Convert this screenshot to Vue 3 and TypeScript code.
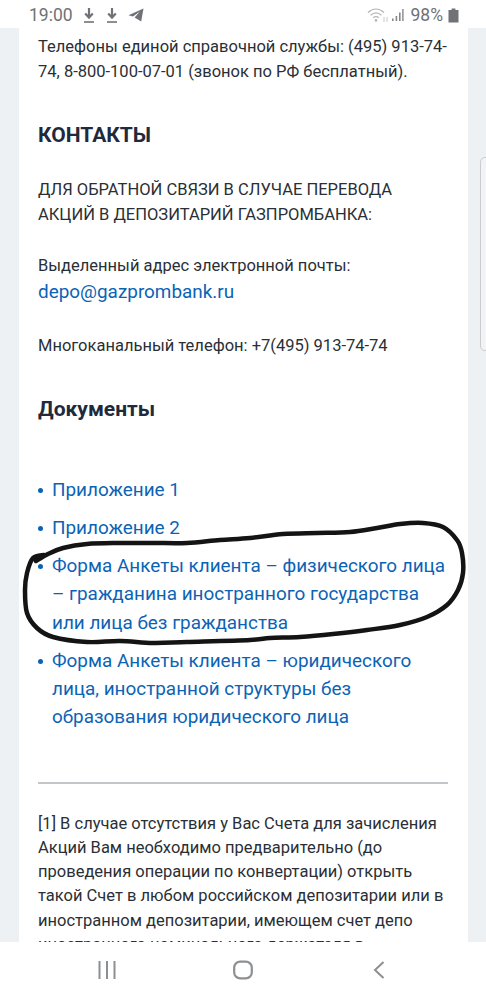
<script setup lang="ts">
const links: string[] = [
  'Приложение 1',
  'Приложение 2',
  'Форма Анкеты клиента – физического лица – гражданина иностранного государства или лица без гражданства',
  'Форма Анкеты клиента – юридического лица, иностранной структуры без образования юридического лица',
]

const pts: [number, number][] = [
  [44, 555], [33, 558], [27, 573], [25, 590], [27, 613], [37, 628], [53, 637], [87, 642], [120, 641], [153, 643], [187, 642], [250, 640], [270, 638], [300, 637], [333, 634], [367, 630], [400, 625], [427, 617], [447, 605], [458, 590], [463, 573], [462, 553], [457, 540], [443, 527], [423, 523], [400, 524], [377, 528], [350, 532], [317, 533], [283, 534], [250, 538], [220, 540], [187, 543], [153, 543], [120, 543], [87, 544], [63, 548], [48, 554], [36, 561],
]

function smooth(p: [number, number][]): string {
  let d = `M${p[0][0]} ${p[0][1]}`
  for (let i = 0; i < p.length - 1; i++) {
    const a = p[Math.max(i - 1, 0)]
    const b = p[i]
    const c = p[i + 1]
    const e = p[Math.min(i + 2, p.length - 1)]
    d += ` C${(b[0] + (c[0] - a[0]) / 6).toFixed(1)} ${(b[1] + (c[1] - a[1]) / 6).toFixed(1)} ${(c[0] - (e[0] - b[0]) / 6).toFixed(1)} ${(c[1] - (e[1] - b[1]) / 6).toFixed(1)} ${c[0]} ${c[1]}`
  }
  return d
}
const scribble = smooth(pts)
</script>

<template>
  <div class="phone">
    <header class="status">
      <div class="status-left">
        <span class="time">19:00</span>
        <svg class="ico" width="14" height="18" viewBox="0 0 14 18"><path d="M7 2v9M3.2 7.6 7 11.6l3.8-4" fill="none" stroke="#6f7276" stroke-width="2.2"/><path d="M2 16h10" stroke="#6f7276" stroke-width="1.6"/></svg>
        <svg class="ico" width="14" height="18" viewBox="0 0 14 18"><path d="M7 2v9M3.2 7.6 7 11.6l3.8-4" fill="none" stroke="#6f7276" stroke-width="2.2"/><path d="M2 16h10" stroke="#6f7276" stroke-width="1.6"/></svg>
        <svg class="ico" width="16" height="14" viewBox="0 0 16 14"><path d="M15.5 .5 .5 7.2l4.4 1.4L12 3.6 6.6 9.4l6.6 4.2z" fill="#6f7276"/></svg>
      </div>
      <div class="status-right">
        <svg width="22" height="16" viewBox="0 0 22 16"><g fill="none" stroke="#b4b6b9" stroke-width="1.3"><path d="M1 5.5c5-4.6 11-4.6 16 0"/><path d="M3.6 8.2c3.4-3 7.4-3 10.8 0"/><path d="M6.2 10.8c1.8-1.5 3.8-1.5 5.6 0"/></g><circle cx="9" cy="13.4" r="1.3" fill="#b4b6b9"/><path d="M17 10v5M20 10v5" stroke="#c6c8ca" stroke-width="1"/></svg>
        <svg width="13" height="14" viewBox="0 0 13 14"><path d="M1 10.5h1.6V13H1zM4.6 8h1.6v5H4.6zM8 4.5h1.6V13H8zM11.2 1h1.4v12h-1.4z" fill="#85888b"/></svg>
        <span class="pct">98%</span>
        <svg width="11" height="15" viewBox="0 0 11 15"><path d="M3.6 .5h3.8v1.6h3.1v12.4H.5V2.100h3.100z" fill="#6f7276"/></svg>
      </div>
    </header>

    <main class="page">
      <article class="card">
        <p class="text intro">Телефоны единой справочной службы: (495) 913-74-74, 8-800-100-07-01 (звонок по РФ бесплатный).</p>
        <h2 class="h-contacts">КОНТАКТЫ</h2>
        <p class="text notice">ДЛЯ ОБРАТНОЙ СВЯЗИ В СЛУЧАЕ ПЕРЕВОДА АКЦИЙ В ДЕПОЗИТАРИЙ ГАЗПРОМБАНКА:</p>
        <p class="text email-label">Выделенный адрес электронной почты:</p>
        <a class="email">depo@gazprombank.ru</a>
        <p class="text phone-line">Многоканальный телефон: +7(495) 913-74-74</p>
        <h2 class="h-docs">Документы</h2>
        <ul class="docs">
          <li v-for="l in links" :key="l"><a>{{ l }}</a></li>
        </ul>
        <hr class="rule" />
        <p class="text note">[1] В случае отсутствия у Вас Счета для зачисления Акций Вам необходимо предварительно (до проведения операции по конвертации) открыть такой Счет в любом российском депозитарии или в иностранном депозитарии, имеющем счет депо иностранного номинального держателя в</p>
      </article>
      <div class="edge"></div>
    </main>

    <nav class="nav">
      <svg class="n1" width="18" height="18" viewBox="0 0 18 18"><path d="M1.500 0v18M9 0v18M16.500 0v18" stroke="#8d8f92" stroke-width="2"/></svg>
      <svg class="n2" width="20" height="20" viewBox="0 0 20 20"><rect x="1.200" y="1.600" width="17.600" height="16.800" rx="6" fill="none" stroke="#8d8f92" stroke-width="2.200"/></svg>
      <svg class="n3" width="12" height="18" viewBox="0 0 12 18"><path d="M10.500 1 2 9l8.500 8" fill="none" stroke="#8d8f92" stroke-width="2"/></svg>
    </nav>
    <svg class="scribble" width="486" height="999" viewBox="0 0 486 999">
      <path :d="scribble" fill="none" stroke="#141414" stroke-width="4.5" stroke-linecap="round" stroke-linejoin="round"/>
    </svg>
  </div>
</template>

<style scoped>
.phone {
  position: relative;
  width: 486px;
  height: 999px;
  display: flex;
  flex-direction: column;
  overflow: hidden;
  background: #fff;
  font-family: Roboto, "Noto Sans", sans-serif;
}
.status {
  height: 28px;
  flex: none;
  display: flex;
  justify-content: space-between;
  align-items: center;
  padding: 2px 27px 0 29px;
  box-sizing: border-box;
  color: #6f7276;
}
.status-left, .status-right { display: flex; align-items: center; }
.time { font-size: 17.500px; margin-right: 9px; }
.ico { margin-right: 9px; }
.status-right { gap: 2px; }
.pct { font-size: 17.500px; margin: 0 3px 0 5px; }
.page {
  flex: 1;
  min-height: 0;
  position: relative;
  overflow: hidden;
  background: #eef1f4;
  padding: 0 18px 0 19px;
}
.card {
  background: #fff;
  height: 100%;
  padding: 7px 20px 0 19px;
  box-sizing: border-box;
  color: #2a2f36;
}
.text { margin: 0; font-size: 16.500px; line-height: 24.500px; }
.h-contacts { margin: 37px 0 0; font-size: 21px; line-height: 28px; font-weight: 700; color: #1f2a3d; }
.notice { margin-top: 29px; }
.email-label { margin-top: 27px; }
.email { display: block; margin-top: 0; font-size: 18.900px; line-height: 26px; color: #0b63b5; }
.phone-line { margin-top: 29px; }
.h-docs { margin: 37px 0 0; font-size: 21px; line-height: 28px; font-weight: 700; color: #1f2a3d; }
.docs { list-style: none; margin: 53px 0 0; padding: 0; }
.docs li {
  position: relative;
  padding-left: 14px;
  font-size: 18.900px;
  line-height: 28.400px;
  color: #0b63b5;
  margin-bottom: 9.500px;
}
.docs li::before {
  content: "";
  position: absolute;
  left: 0;
  top: 12px;
  width: 5px;
  height: 5px;
  border-radius: 50%;
  background: #0b63b5;
}
.rule { margin: 50px 0 0; border: 0; border-top: 2px solid #c4c7ca; }
.note { margin-top: 28px; line-height: 24.200px; }
.edge {
  position: absolute;
  right: -8px;
  top: 129px;
  width: 12px;
  height: 192px;
  border: 1px solid #c9ccd0;
  border-radius: 5px;
  background: #f1f3f5;
}
.scribble { position: absolute; left: 0; top: 0; pointer-events: none; }
.nav {
  flex: none;
  height: 57px;
  display: flex;
  align-items: center;
  padding: 0 0 2px 98px;
  box-sizing: border-box;
  background: #fff;
}
.n2 { margin-left: 117px; }
.n3 { margin-left: 120px; }
</style>
